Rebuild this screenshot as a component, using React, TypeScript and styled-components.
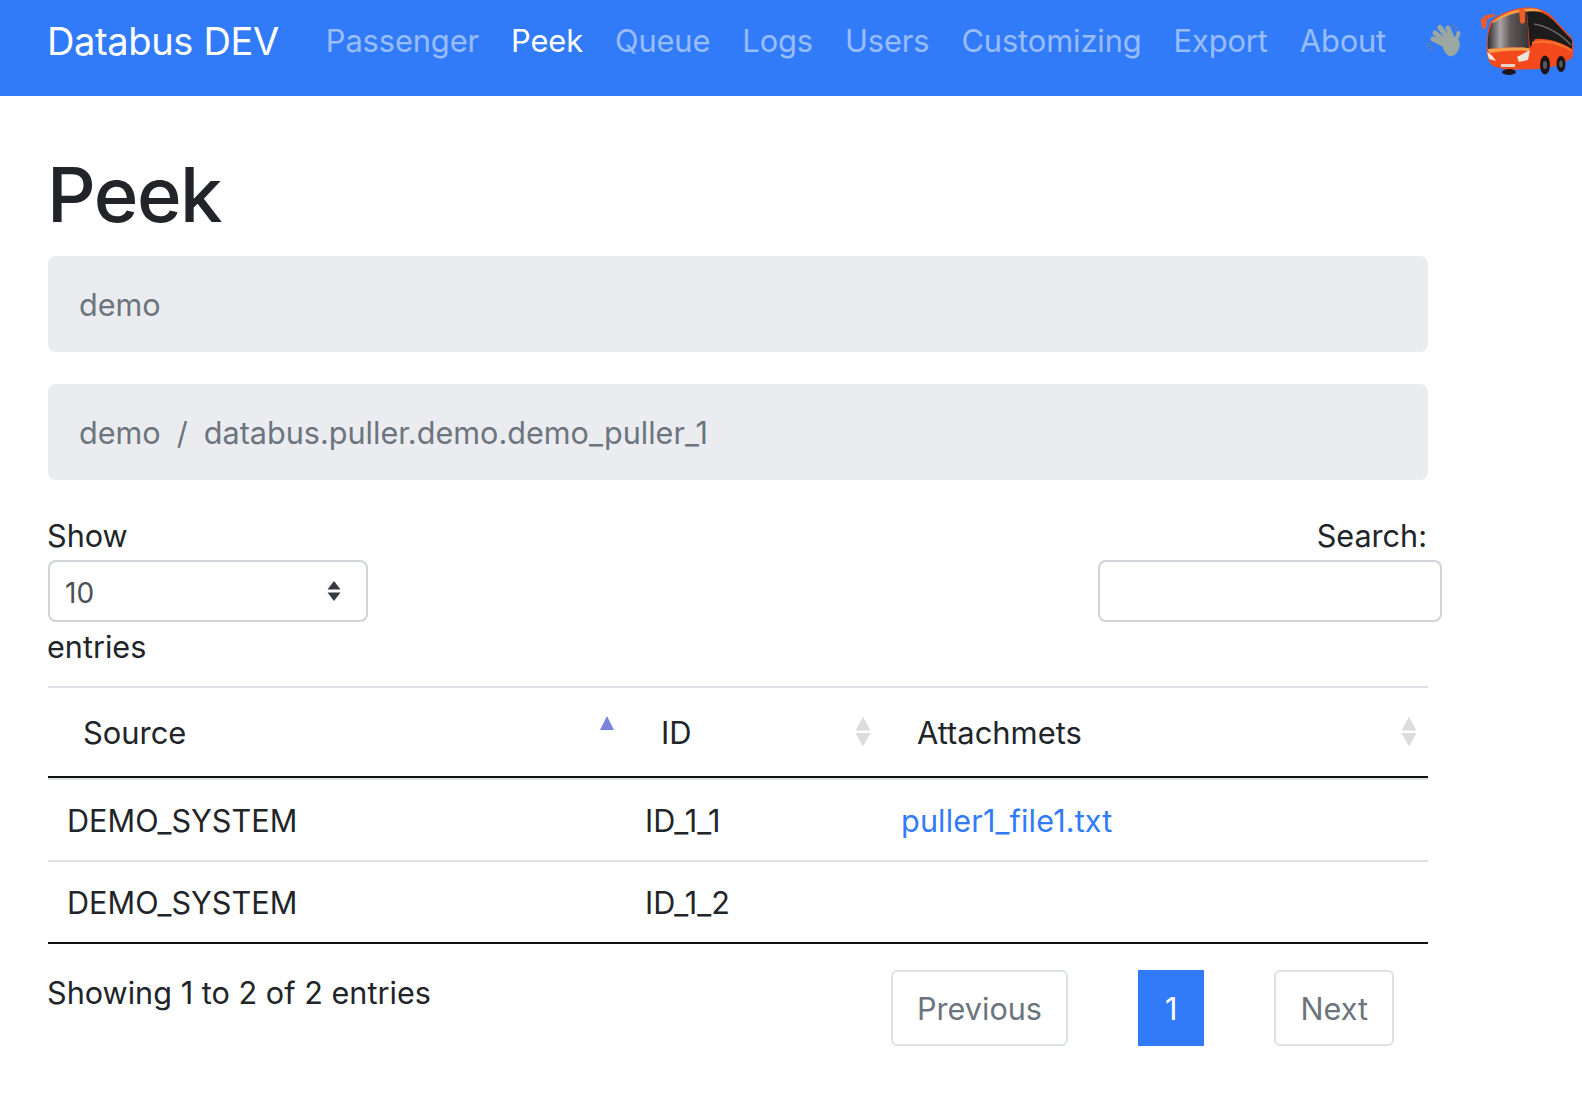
import React from "react";
import styled, { createGlobalStyle } from "styled-components";

const Global = createGlobalStyle`
  html, body { margin: 0; padding: 0; background: #fff; }
  body { font-family: Inter, "Liberation Sans", sans-serif; font-size: 30.6px; line-height: 48px; color: #212529; }
  * { box-sizing: border-box; }
`;

const Navbar = styled.nav`
  height: 96px; background: #327bf8; display: flex; align-items: center; padding: 0 0 14px 47px; overflow: hidden;
`;
const Brand = styled.a`
  font-size: 38px; line-height: 60px; color: #fff; margin-right: 32px; letter-spacing: -0.35px;
`;
const NavLinks = styled.div`display: flex; gap: 32px; margin-left: 15px;`;
const NavLink = styled.a<{ $active?: boolean }>`
  font-size: 30.8px; color: ${p => (p.$active ? "#fff" : "rgba(255,255,255,0.5)")}; letter-spacing: -0.1px;
`;
const NavIcons = styled.div`display: flex; align-items: center; margin: 0 0 2px 37px; gap: 10px; flex: none;`;

const Main = styled.main`width: 1380px; margin-left: 48px;`;
const Title = styled.h1`
  font-size: 76px; line-height: 92px; font-weight: 500; margin: 52px 0 16px -1px; letter-spacing: -1.5px;
`;
const Crumbs = styled.div`
  height: 96px; background: #ebecf0; border-radius: 8px; padding: 1px 31px 0; margin-bottom: 32px;
  display: flex; align-items: center; color: #6c757d; gap: 16px;
`;
const Controls = styled.div`display: flex; justify-content: space-between; align-items: flex-start; width: 1394px; margin-top: 32px;`;
const Col = styled.div<{ $right?: boolean }>`
  display: flex; flex-direction: column; align-items: ${p => (p.$right ? "flex-end" : "flex-start")};
`;
const SearchLabel = styled.span`line-height: 48px; padding-right: 15px;`;
const ShowLabel = styled.span`line-height: 48px; margin-left: -1px;`;
const EntriesLabel = styled.span`line-height: 48px; margin: 1px 0 0 -1px;`;
const SelectBox = styled.div`
  width: 320px; height: 62px; border: 2px solid #ced4da; border-radius: 8px;
  display: flex; align-items: center; justify-content: space-between; padding: 0 25px 0 15px;
  font-size: 28px; color: #495057;
`;
const SelectValue = styled.span`margin-top: 3px;`;
const SearchBox = styled.input`
  width: 344px; height: 62px; border: 2px solid #ced4da; border-radius: 8px; background: #fff; display: block;
`;

const Table = styled.table`
  width: 1380px; border-collapse: separate; border-spacing: 0; table-layout: fixed; margin-top: 15px;
  border-top: 2px solid #dee2e6; border-bottom: 2px solid #111;
`;
const Th = styled.th<{ $w: number }>`
  width: ${p => p.$w}px; height: 90px; padding: 2px 36px 0 35px; text-align: left; font-weight: 400; font-size: 30.9px;
  border-bottom: 2px solid #111; position: relative;
`;
const SortIcon = styled.svg`position: absolute; right: 10px; top: 28px;`;
const Td = styled.td`height: 82px; padding: 2px 19px 0; border-top: 2px solid #dee2e6; letter-spacing: 0.03px;`;
const FileLink = styled.a`color: #327bf8; letter-spacing: 0.15px;`;

const Footer = styled.div`display: flex; justify-content: space-between; align-items: flex-start; margin-top: 26px; padding-right: 34px;`;
const Info = styled.div`line-height: 48px; margin: -1px 0 0 -1px; letter-spacing: 0.03px;`;
const Pager = styled.div`display: flex; gap: 70px;`;
const PageBtn = styled.a<{ $active?: boolean }>`
  height: 76px; display: flex; align-items: center; justify-content: center;
  padding: 2px ${p => (p.$active ? 25 : 24)}px 0; border: 2px solid ${p => (p.$active ? "#327bf8" : "#dee2e6")};
  background: ${p => (p.$active ? "#327bf8" : "#fff")}; color: ${p => (p.$active ? "#fff" : "#6c757d")};
  border-radius: ${p => (p.$active ? "0" : "6px")};
`;

const Hand = () => (
  <svg width="44" height="40" viewBox="0 0 44 40">
    <g stroke="#9ba89f" strokeWidth="5" strokeLinecap="round" fill="none">
      <path d="M27 21 L17 7.500" />
      <path d="M24 23 L12 13" />
      <path d="M22 25 L10 19" />
      <path d="M30 20 L25 8" />
      <path d="M32 24 L35.500 13" strokeWidth="4" />
    </g>
    <path d="M18 23 L34 16 L37 24 C36 32 32 37 26 36 C22 34 20 28 18 23Z" fill="#9ba89f" />
    <g stroke="#6f8596" strokeWidth="0.900" strokeLinecap="round" fill="none">
      <path d="M3 24 L8 31" />
      <path d="M5 23 L10 29" />
      <path d="M29 5 L33 10" />
      <path d="M31 4 L35 9" />
    </g>
  </svg>
);

const Bus = () => (
  <svg width="104" height="76" viewBox="0 0 104 76">
    <defs>
      <filter id="soft" x="-5%" y="-5%" width="110%" height="110%"><feGaussianBlur stdDeviation="0.6" /></filter>
      <linearGradient id="glass" x1="0" y1="0" x2="1" y2="0">
        <stop offset="0" stopColor="#2f2a2c" />
        <stop offset="0.3" stopColor="#a9a4a5" />
        <stop offset="0.55" stopColor="#5f5859" />
        <stop offset="1" stopColor="#3a3435" />
      </linearGradient>
    </defs>
    <g filter="url(#soft)">
      <path d="M14 19 C26 9 44 4 58 6 C68 8 74 12 80 20 L94 35 C97 40 97 50 95 56 C88 61 76 66 62 67 L30 68 L16 64 C11 60 9 52 10 42 C10 32 11 25 14 19Z" fill="#f3481c" />
      <path d="M16 19 C28 11 40 8 50 9 L52 46 C38 45 22 46 11 47 C10 36 12 26 16 19Z" fill="url(#glass)" />
      <path d="M50 9 C60 7 70 12 78 20 L95 38 L95 47 C84 40 70 36 58 37 L53 46Z" fill="#1f1a1b" />
      <path d="M57 22 C70 24 84 32 94 43" stroke="#6d6566" strokeWidth="1.500" fill="none" />
      <path d="M15 20 C28 10 44 5 60 7 L66 10 C48 7 30 12 16 21Z" fill="#f6a04a" />
      <path d="M11 47 C24 46 40 45 53 46 L51 49 C38 48 24 49 12 51Z" fill="#f6a04a" />
      <path d="M55 42 C70 38 86 44 95 50 L95 48 C84 40 68 36 55 40Z" fill="#f6732e" />
      <path d="M4 17 L9 13 L18 12 L18 14 L10 17 L9 26 L6 27 L4 22Z" fill="#f25a26" />
      <path d="M42 9 C44 6 48 6 48 9 L48 20 C46 23 43 22 43 19Z" fill="#f25a26" />
      <path d="M10 50 C14 52 17 55 19 59 L12 57Z" fill="#ece4da" />
      <path d="M40 55 L53 48 L51 58 L42 60Z" fill="#ece4da" />
      <rect x="24" y="62" width="14" height="3" fill="#e4d4c8" />
      <ellipse cx="32" cy="70" rx="7" ry="3" fill="#1b191a" />
      <ellipse cx="68" cy="63" rx="5" ry="9.500" fill="#1b191a" />
      <ellipse cx="68" cy="63" rx="2" ry="4" fill="#5c5a5a" />
      <ellipse cx="84" cy="62" rx="4.500" ry="8" fill="#1b191a" />
      <ellipse cx="84" cy="62" rx="1.800" ry="3.500" fill="#5c5a5a" />
    </g>
  </svg>
);

const Sort = ({ mode }: { mode: "asc" | "both" }) => (
  <SortIcon width="18" height="32" viewBox="0 0 18 32">
    <path d={mode === "asc" ? "M9 0 L16 14 L2 14Z" : "M9 1 L16.500 14.500 L1.500 14.500Z"} fill={mode === "asc" ? "#7b84d9" : "#dcdcdc"} />
    {mode === "both" && <path d="M1.500 17 L16.500 17 L9 30.500Z" fill="#dcdcdc" />}
  </SortIcon>
);

const Chevrons = () => (
  <svg width="14" height="20" viewBox="0 0 14 20">
    <path d="M7 0 L13.500 8.500 L0.500 8.500Z M0.500 11.500 L13.500 11.500 L7 20Z" fill="#343a40" />
  </svg>
);

export default function App() {
  const links = ["Passenger", "Peek", "Queue", "Logs", "Users", "Customizing", "Export", "About"];
  return (
    <>
      <Global />
      <Navbar>
        <Brand>Databus DEV</Brand>
        <NavLinks>
          {links.map(l => <NavLink key={l} $active={l === "Peek"}>{l}</NavLink>)}
        </NavLinks>
        <NavIcons><Hand /><Bus /></NavIcons>
      </Navbar>
      <Main>
        <Title>Peek</Title>
        <Crumbs>demo</Crumbs>
        <Crumbs><span>demo</span><span>/</span><span>databus.puller.demo.demo_puller_1</span></Crumbs>
        <Controls>
          <Col>
            <ShowLabel>Show</ShowLabel>
            <SelectBox><SelectValue>10</SelectValue><Chevrons /></SelectBox>
            <EntriesLabel>entries</EntriesLabel>
          </Col>
          <Col $right>
            <SearchLabel>Search:</SearchLabel>
            <SearchBox />
          </Col>
        </Controls>
        <Table>
          <thead>
            <tr>
              <Th $w={578}>Source<Sort mode="asc" /></Th>
              <Th $w={256}>ID<Sort mode="both" /></Th>
              <Th $w={546}>Attachmets<Sort mode="both" /></Th>
            </tr>
          </thead>
          <tbody>
            <tr><Td>DEMO_SYSTEM</Td><Td>ID_1_1</Td><Td><FileLink>puller1_file1.txt</FileLink></Td></tr>
            <tr><Td>DEMO_SYSTEM</Td><Td>ID_1_2</Td><Td /></tr>
          </tbody>
        </Table>
        <Footer>
          <Info>Showing 1 to 2 of 2 entries</Info>
          <Pager>
            <PageBtn>Previous</PageBtn>
            <PageBtn $active>1</PageBtn>
            <PageBtn>Next</PageBtn>
          </Pager>
        </Footer>
      </Main>
    </>
  );
}
